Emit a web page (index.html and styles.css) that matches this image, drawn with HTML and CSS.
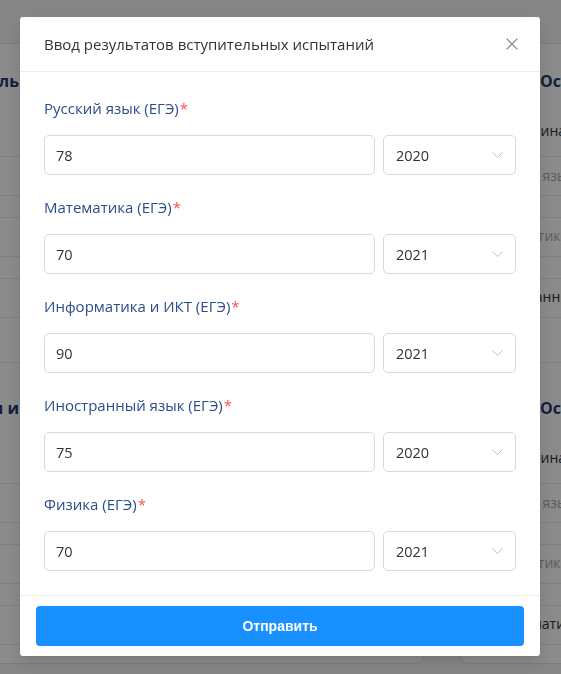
FILE: index.html
```html
<!DOCTYPE html>
<html lang="ru">
<head>
<meta charset="utf-8">
<title>Ввод результатов</title>
<link rel="stylesheet" href="styles.css">
</head>
<body>
<div class="page">
  <div class="card card-left">
    <section class="sect">
      <div class="sect-head"><span>Профиль</span></div>
      <div class="row row-head">Дисциплина</div>
      <div class="row row-a muted">Русский язык</div>
      <div class="row row-b muted">Математика</div>
      <div class="row row-b">Иностранный</div>
    </section>
    <section class="sect">
      <div class="sect-head"><span>Сведения о поступлении и</span></div>
      <div class="row row-head">Дисциплина</div>
      <div class="row row-a muted">Русский язык</div>
      <div class="row row-b muted">Математика</div>
      <div class="row row-b">Информатика</div>
    </section>
  </div>
  <div class="card card-right">
    <section class="sect">
      <div class="sect-head">Основные сведения</div>
      <div class="row row-head">Дисциплина</div>
      <div class="row row-a muted">Русский язык</div>
      <div class="row row-b muted">Математика</div>
      <div class="row row-b">Иностранный</div>
    </section>
    <section class="sect">
      <div class="sect-head">Основные сведения</div>
      <div class="row row-head">Дисциплина</div>
      <div class="row row-a muted">Русский язык</div>
      <div class="row row-b muted">Математика</div>
      <div class="row row-b">Информатика</div>
    </section>
  </div>
</div>

<div class="overlay"></div>

<div class="modal">
  <div class="modal-header">
    <div class="modal-title">Ввод результатов вступительных испытаний</div>
    <span class="close">
      <svg width="12" height="12" viewBox="0 0 12 12"><path d="M0.6 0.6 L11.4 11.4 M11.4 0.6 L0.6 11.4" stroke="#8c8c8c" stroke-width="1.3" fill="none"/></svg>
    </span>
  </div>
  <div class="modal-body">
    <div class="item">
      <div class="label">Русский язык (ЕГЭ)<span class="req">*</span></div>
      <div class="controls">
        <div class="input">78</div>
        <div class="select"><span>2020</span><svg class="chev" width="11" height="6" viewBox="0 0 11 6"><path d="M0.5 0.5 L5.5 5.5 L10.5 0.5" stroke="#bfbfbf" stroke-width="1" fill="none"/></svg></div>
      </div>
    </div>
    <div class="item">
      <div class="label">Математика (ЕГЭ)<span class="req">*</span></div>
      <div class="controls">
        <div class="input">70</div>
        <div class="select"><span>2021</span><svg class="chev" width="11" height="6" viewBox="0 0 11 6"><path d="M0.5 0.5 L5.5 5.5 L10.5 0.5" stroke="#bfbfbf" stroke-width="1" fill="none"/></svg></div>
      </div>
    </div>
    <div class="item">
      <div class="label">Информатика и ИКТ (ЕГЭ)<span class="req">*</span></div>
      <div class="controls">
        <div class="input">90</div>
        <div class="select"><span>2021</span><svg class="chev" width="11" height="6" viewBox="0 0 11 6"><path d="M0.5 0.5 L5.5 5.5 L10.5 0.5" stroke="#bfbfbf" stroke-width="1" fill="none"/></svg></div>
      </div>
    </div>
    <div class="item">
      <div class="label">Иностранный язык (ЕГЭ)<span class="req">*</span></div>
      <div class="controls">
        <div class="input">75</div>
        <div class="select"><span>2020</span><svg class="chev" width="11" height="6" viewBox="0 0 11 6"><path d="M0.5 0.5 L5.5 5.5 L10.5 0.5" stroke="#bfbfbf" stroke-width="1" fill="none"/></svg></div>
      </div>
    </div>
    <div class="item">
      <div class="label">Физика (ЕГЭ)<span class="req">*</span></div>
      <div class="controls">
        <div class="input">70</div>
        <div class="select"><span>2021</span><svg class="chev" width="11" height="6" viewBox="0 0 11 6"><path d="M0.5 0.5 L5.5 5.5 L10.5 0.5" stroke="#bfbfbf" stroke-width="1" fill="none"/></svg></div>
      </div>
    </div>
  </div>
  <div class="modal-footer">
    <button class="btn">Отправить</button>
  </div>
</div>
</body>
</html>
```

FILE: styles.css
```css
* { box-sizing: border-box; }
html, body {
  margin: 0;
  padding: 0;
  width: 561px;
  height: 674px;
  overflow: hidden;
  background: #f5f5f5;
  font-family: "Open Sans", "Noto Sans", sans-serif;
}

/* background page (dimmed behind the modal) */
.page {
  display: flex;
  gap: 36px;
  padding-top: 43px;
  margin-left: -16px;
  width: 900px;
}
.card {
  background: #fff;
  border: 1px solid #e3e3e3;
  border-radius: 8px;
  height: 621px;
  overflow: hidden;
}
.card-left { flex: 0 0 440px; }
.card-right { flex: 0 0 420px; }
.sect-head {
  height: 62px;
  padding: 26px 0 0 79px;
  line-height: 22px;
  font-size: 16px;
  font-weight: 700;
  color: #1f3a6e;
  white-space: nowrap;
}
.card-left .sect-head {
  padding-left: 0;
  width: 34px;
  display: flex;
  justify-content: flex-end;
}
.row {
  font-size: 14px;
  color: #333;
  padding-left: 24px;
  white-space: nowrap;
  border-bottom: 1px solid #e8e8e8;
}
.card-left .row { padding-left: 60px; }
.row-head { height: 51px; line-height: 50px; padding-left: 20px; }
.row-a { height: 39px; line-height: 38px; }
.row-b {
  height: 61px;
  line-height: 38px;
  padding-top: 21px;
  box-shadow: inset 0 21px 0 #fff, inset 0 22px 0 #e8e8e8;
}
.muted { color: #aaa; }
.sect + .sect { margin-top: 44px; border-top: 1px solid #e8e8e8; padding-top: 8px; }

.overlay {
  position: fixed;
  inset: 0;
  background: rgba(0, 0, 0, 0.45);
}

/* modal */
.modal {
  position: fixed;
  left: 20px;
  top: 17px;
  width: 520px;
  background: #fff;
  border-radius: 3px;
  box-shadow: 0 3px 6px -4px rgba(0,0,0,.12), 0 6px 16px rgba(0,0,0,.08), 0 9px 28px 8px rgba(0,0,0,.05);
}
.modal-header {
  height: 55px;
  padding: 0 22px 0 24px;
  border-bottom: 1px solid #ededed;
  display: flex;
  align-items: center;
  justify-content: space-between;
}
.modal-title {
  font-size: 15px;
  color: #333;
}
.close { display: flex; width: 12px; height: 12px; }

.modal-body {
  padding: 25px 24px 24px;
  display: flex;
  flex-direction: column;
  gap: 21px;
}
.label {
  height: 22px;
  line-height: 22px;
  font-size: 15px;
  color: #2c4d8c;
  margin-bottom: 16px;
}
.req { color: #ff4d4f; margin-left: 1px; }
.controls {
  display: flex;
  gap: 8px;
}
.input, .select {
  height: 40px;
  border: 1px solid #d9d9d9;
  border-radius: 5px;
  font-size: 14.5px;
  color: #333;
  display: flex;
  align-items: center;
}
.input { flex: 1; padding-left: 11px; }
.select {
  flex: 0 0 133px;
  padding: 0 12px;
  justify-content: space-between;
}
.chev { display: block; }

.modal-footer {
  border-top: 1px solid #ededed;
  padding: 10px 16px;
}
.btn {
  display: block;
  width: 100%;
  height: 40px;
  border: 0;
  border-radius: 4px;
  background: #1890ff;
  color: #fff;
  font-family: "Liberation Sans", "Open Sans", sans-serif;
  font-size: 14px;
  font-weight: 700;
}
```
